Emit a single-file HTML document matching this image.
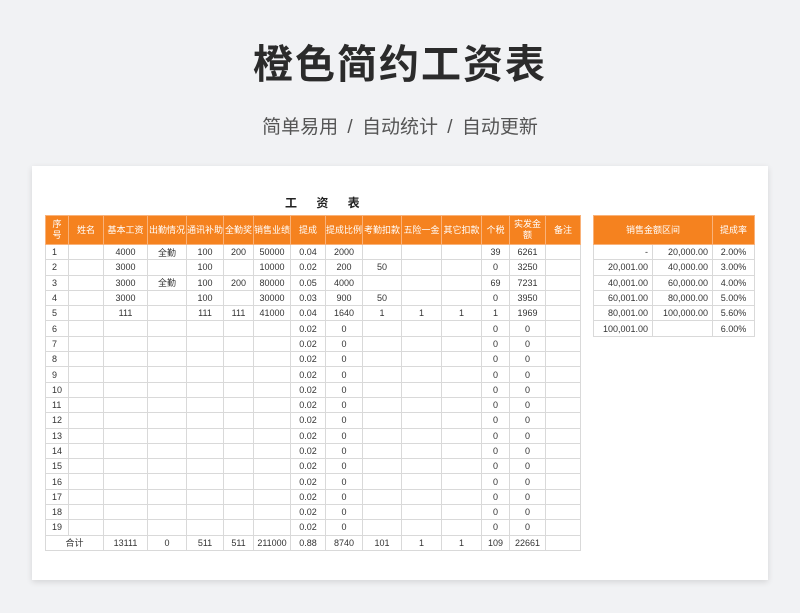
<!DOCTYPE html>
<html><head><meta charset="utf-8"><style>
body{margin:0;width:800px;height:613px;background:#f1f2f4;font-family:"Liberation Sans","Noto Sans CJK SC",sans-serif;position:relative;overflow:hidden}
.t1{position:absolute;top:32px;width:800px;text-align:center;font-size:40px;font-weight:bold;color:#2b2b2b;letter-spacing:2px}
.t2{position:absolute;top:112px;width:800px;text-align:center;font-size:19px;color:#555;word-spacing:4px}
.card{position:absolute;left:32px;top:166px;width:736px;height:414px;background:#fff;box-shadow:0 2px 6px rgba(0,0,0,.12)}
.ct{position:absolute;left:285px;top:194px;font-size:12px;font-weight:bold;color:#222;letter-spacing:8px}
table{position:absolute;border-collapse:collapse;table-layout:fixed;font-size:9px;color:#333}
td{border:1px solid #d9d9d9;height:14.3px;padding:0;text-align:center;white-space:nowrap;overflow:hidden}
th{background:#f5821f;color:#fff;font-weight:normal;border:1px solid #f9b27a;height:28px;padding:0;font-size:9px;line-height:11px}
td.l{text-align:left;padding-left:6px}
td.r{text-align:right;padding-right:4px}
</style></head><body>
<div class="t1">橙色简约工资表</div>
<div class="t2">简单易用 / 自动统计 / 自动更新</div>
<div class="card"></div>
<div class="ct">工 资 表</div>
<table style="left:45px;top:215px;width:535px">
<colgroup><col style="width:23px"><col style="width:35px"><col style="width:44px"><col style="width:39px"><col style="width:37px"><col style="width:30px"><col style="width:37px"><col style="width:35px"><col style="width:37px"><col style="width:39px"><col style="width:40px"><col style="width:40px"><col style="width:28px"><col style="width:36px"><col style="width:35px"></colgroup>
<tr><th>序<br>号</th><th>姓名</th><th>基本工资</th><th>出勤情况</th><th>通讯补助</th><th>全勤奖</th><th>销售业绩</th><th>提成</th><th>提成比例</th><th>考勤扣款</th><th>五险一金</th><th>其它扣款</th><th>个税</th><th>实发金额</th><th>备注</th></tr>
<tr><td class="l">1</td><td></td><td>4000</td><td>全勤</td><td>100</td><td>200</td><td>50000</td><td>0.04</td><td>2000</td><td></td><td></td><td></td><td>39</td><td>6261</td><td></td></tr>
<tr><td class="l">2</td><td></td><td>3000</td><td></td><td>100</td><td></td><td>10000</td><td>0.02</td><td>200</td><td>50</td><td></td><td></td><td>0</td><td>3250</td><td></td></tr>
<tr><td class="l">3</td><td></td><td>3000</td><td>全勤</td><td>100</td><td>200</td><td>80000</td><td>0.05</td><td>4000</td><td></td><td></td><td></td><td>69</td><td>7231</td><td></td></tr>
<tr><td class="l">4</td><td></td><td>3000</td><td></td><td>100</td><td></td><td>30000</td><td>0.03</td><td>900</td><td>50</td><td></td><td></td><td>0</td><td>3950</td><td></td></tr>
<tr><td class="l">5</td><td></td><td>111</td><td></td><td>111</td><td>111</td><td>41000</td><td>0.04</td><td>1640</td><td>1</td><td>1</td><td>1</td><td>1</td><td>1969</td><td></td></tr>
<tr><td class="l">6</td><td></td><td></td><td></td><td></td><td></td><td></td><td>0.02</td><td>0</td><td></td><td></td><td></td><td>0</td><td>0</td><td></td></tr>
<tr><td class="l">7</td><td></td><td></td><td></td><td></td><td></td><td></td><td>0.02</td><td>0</td><td></td><td></td><td></td><td>0</td><td>0</td><td></td></tr>
<tr><td class="l">8</td><td></td><td></td><td></td><td></td><td></td><td></td><td>0.02</td><td>0</td><td></td><td></td><td></td><td>0</td><td>0</td><td></td></tr>
<tr><td class="l">9</td><td></td><td></td><td></td><td></td><td></td><td></td><td>0.02</td><td>0</td><td></td><td></td><td></td><td>0</td><td>0</td><td></td></tr>
<tr><td class="l">10</td><td></td><td></td><td></td><td></td><td></td><td></td><td>0.02</td><td>0</td><td></td><td></td><td></td><td>0</td><td>0</td><td></td></tr>
<tr><td class="l">11</td><td></td><td></td><td></td><td></td><td></td><td></td><td>0.02</td><td>0</td><td></td><td></td><td></td><td>0</td><td>0</td><td></td></tr>
<tr><td class="l">12</td><td></td><td></td><td></td><td></td><td></td><td></td><td>0.02</td><td>0</td><td></td><td></td><td></td><td>0</td><td>0</td><td></td></tr>
<tr><td class="l">13</td><td></td><td></td><td></td><td></td><td></td><td></td><td>0.02</td><td>0</td><td></td><td></td><td></td><td>0</td><td>0</td><td></td></tr>
<tr><td class="l">14</td><td></td><td></td><td></td><td></td><td></td><td></td><td>0.02</td><td>0</td><td></td><td></td><td></td><td>0</td><td>0</td><td></td></tr>
<tr><td class="l">15</td><td></td><td></td><td></td><td></td><td></td><td></td><td>0.02</td><td>0</td><td></td><td></td><td></td><td>0</td><td>0</td><td></td></tr>
<tr><td class="l">16</td><td></td><td></td><td></td><td></td><td></td><td></td><td>0.02</td><td>0</td><td></td><td></td><td></td><td>0</td><td>0</td><td></td></tr>
<tr><td class="l">17</td><td></td><td></td><td></td><td></td><td></td><td></td><td>0.02</td><td>0</td><td></td><td></td><td></td><td>0</td><td>0</td><td></td></tr>
<tr><td class="l">18</td><td></td><td></td><td></td><td></td><td></td><td></td><td>0.02</td><td>0</td><td></td><td></td><td></td><td>0</td><td>0</td><td></td></tr>
<tr><td class="l">19</td><td></td><td></td><td></td><td></td><td></td><td></td><td>0.02</td><td>0</td><td></td><td></td><td></td><td>0</td><td>0</td><td></td></tr>
<tr><td colspan="2">合计</td><td>13111</td><td>0</td><td>511</td><td>511</td><td>211000</td><td>0.88</td><td>8740</td><td>101</td><td>1</td><td>1</td><td>109</td><td>22661</td><td></td></tr>
</table>
<table style="left:593px;top:215px;width:161px">
<colgroup><col style="width:59px"><col style="width:60px"><col style="width:42px"></colgroup>
<tr><th colspan="2">销售金额区间</th><th>提成率</th></tr>
<tr><td class="r">-</td><td class="r">20,000.00</td><td>2.00%</td></tr>
<tr><td class="r">20,001.00</td><td class="r">40,000.00</td><td>3.00%</td></tr>
<tr><td class="r">40,001.00</td><td class="r">60,000.00</td><td>4.00%</td></tr>
<tr><td class="r">60,001.00</td><td class="r">80,000.00</td><td>5.00%</td></tr>
<tr><td class="r">80,001.00</td><td class="r">100,000.00</td><td>5.60%</td></tr>
<tr><td class="r">100,001.00</td><td></td><td>6.00%</td></tr>
</table>
</body></html>
